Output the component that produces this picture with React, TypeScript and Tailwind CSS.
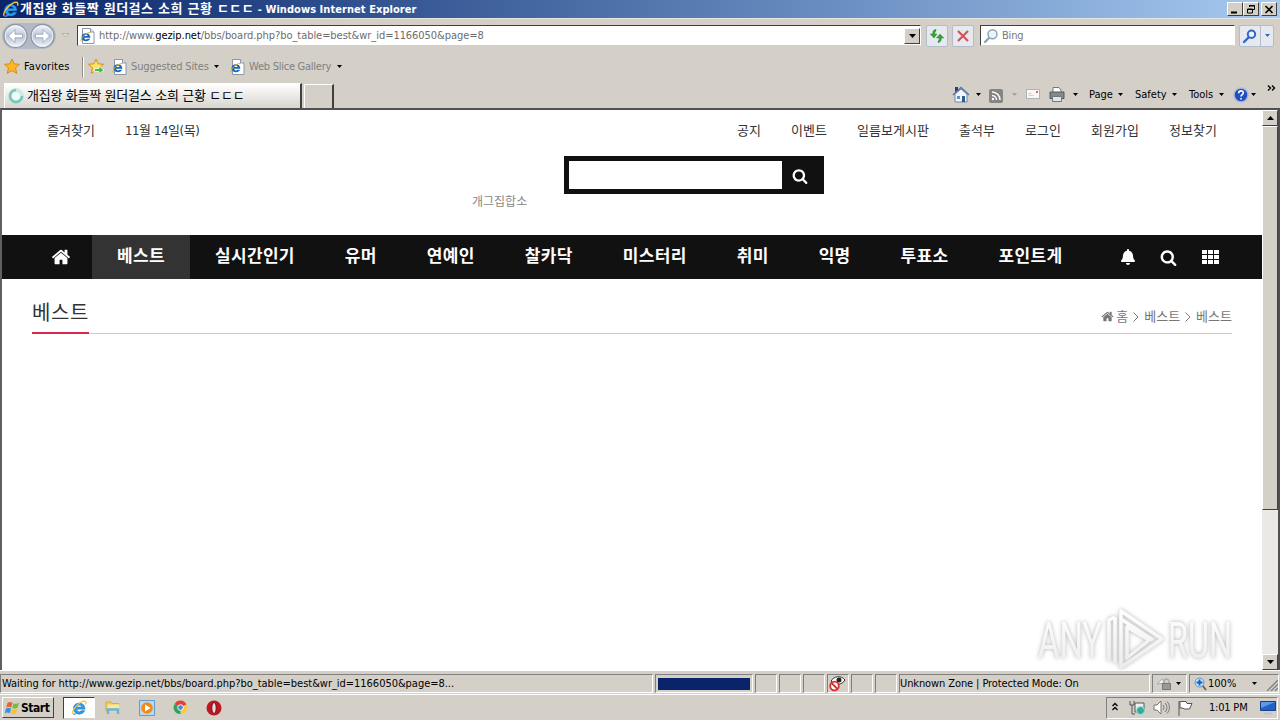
import { ReactNode } from "react";
import { FaBell } from "react-icons/fa";

const topLinks = ["공지", "이벤트", "일름보게시판", "출석부", "로그인", "회원가입", "정보찾기"];

const menu = ["베스트", "실시간인기", "유머", "연예인", "찰카닥", "미스터리", "취미", "익명", "투표소", "포인트게"];

const HomeIcon = ({ size, className = "" }: { size: number; className?: string }) => (
  <svg width={size} height={size} viewBox="0 0 1792 1792" fill="currentColor" className={`shrink-0 ${className}`}>
    <path d="M1472 992v480q0 26-19 45t-45 19h-384v-384h-256v384h-384q-26 0-45-19t-19-45v-480q0-1 .5-3t.5-3l575-474 575 474q1 2 1 6zm223-69l-62 74q-8 9-21 11h-3q-13 0-21-7l-692-577-692 577q-12 8-24 7-13-2-21-11l-62-74q-8-10-7-23.5t11-21.5l719-599q32-26 76-26t76 26l244 204v-195q0-14 9-23t23-9h192q14 0 23 9t9 23v408l219 182q10 8 11 21.5t-7 23.5z" />
  </svg>
);

const SearchIcon = ({ size, className = "" }: { size: number; className?: string }) => (
  <svg width={size} height={size} viewBox="0 0 1792 1792" fill="currentColor" className={`shrink-0 ${className}`}>
    <path d="M1216 832q0-185-131.5-316.5t-316.5-131.5-316.5 131.5-131.5 316.5 131.5 316.5 316.5 131.5 316.5-131.5 131.5-316.5zm512 832q0 52-38 90t-90 38q-54 0-90-38l-343-342q-179 124-399 124-143 0-273.5-55.5t-225-150-150-225-55.5-273.5 55.5-273.5 150-225 225-150 273.5-55.5 273.5 55.5 225 150 150 225 55.5 273.5q0 220-124 399l343 343q37 37 37 90z" />
  </svg>
);

const Caret = ({ className = "" }: { className?: string }) => (
  <svg width="5" height="3" viewBox="0 0 5 3" className={`shrink-0 ${className}`}>
    <path d="M0 0h5L2.5 3z" fill="currentColor" />
  </svg>
);

const IeLogo = ({ size = 16 }: { size?: number }) => (
  <svg width={size} height={size} viewBox="0 0 16 16" className="shrink-0">
    <path d="M14 9.300H5.800c.2 2.800 3.700 3.200 4.700 1.300h3.200C12.200 16 2.400 15.200 2.400 8.400 2.400 1.200 14.600 1.200 14 9.300zM5.900 7h4.800C10.400 4.700 6.200 4.700 5.900 7z" fill="#2f9bea" stroke="#1767b4" strokeWidth=".4" />
    <path d="M2.200 13.800C-.8 11.500 8.500 1 13.600 1.200c1.600.1 1.600 2 .9 3.300" fill="none" stroke="#f5c33a" strokeWidth="1.300" />
    <path d="M2.200 13.800c1 .8 2.600.2 4-.9" fill="none" stroke="#3b9fe8" strokeWidth="1.200" />
  </svg>
);

const IePage = () => (
  <svg width="15" height="16" viewBox="0 0 15 16" className="shrink-0">
    <path d="M2.500.5h8l3.500 3.500v11.500H2.500z" fill="#fff" stroke="#8c96a8" />
    <path d="M10.500.5V4H14" fill="#dfe6ef" stroke="#8c96a8" />
    <path d="M10.300 9.700H4.200c.2 2 2.700 2.200 3.400 1h2.500C9 14.400 1.500 14 1.500 9.200c0-5.200 9-5.200 8.800.5zM4.300 8h3.300C7.400 6.200 4.500 6.200 4.300 8z" fill="#1468bd" />
    <path d="M1 13.500C0 11 6 4 10.500 4.500" fill="none" stroke="#e5ae2c" />
  </svg>
);

const Star = ({ arrow = false }: { arrow?: boolean }) => (
  <svg width="17" height="17" viewBox="0 0 17 17" className="shrink-0">
    <path d="M8 1l2.100 4.800 5.400.5-4 3.600 1.200 5.400L8 12.500l-4.700 2.800 1.200-5.400-4-3.600 5.400-.5z" fill={arrow ? "#ffe25c" : "#fdb829"} stroke="#d58512" strokeWidth=".9" />
    {arrow && <path d="M6.500 10.500h4.500V8l5 4-5 4v-2.500H6.500z" fill="#44c03c" stroke="#fff" strokeWidth=".8" />}
  </svg>
);

const NavCircle = ({ flip = false }: { flip?: boolean }) => (
  <svg width="27" height="26" viewBox="0 0 26 26" className={flip ? "-scale-x-100" : ""}>
    <defs>
      <linearGradient id="orb" x1="0" y1="0" x2="0" y2="1">
        <stop offset="0" stopColor="#f4f7fb" />
        <stop offset=".5" stopColor="#b9c6d8" />
        <stop offset="1" stopColor="#eef5fc" />
      </linearGradient>
    </defs>
    <circle cx="13" cy="13" r="11.500" fill="url(#orb)" stroke="#8d97a6" strokeWidth="1.300" />
    <circle cx="13" cy="13" r="10.300" fill="none" stroke="#fff" strokeOpacity=".7" />
    <path d="M6 13l6.500-6.500v4.700H20v3.600h-7.500v4.700z" fill="#fff" stroke="#8997ab" strokeWidth=".7" />
  </svg>
);

const Lens = ({ color = "#8fa6b4", thick = false }: { color?: string; thick?: boolean }) => (
  <svg width="16" height="16" viewBox="0 0 16 16" className="shrink-0">
    <path d="M2 14L6.500 9.500" stroke={color} strokeWidth="2.400" strokeLinecap="round" />
    <circle cx="9.500" cy="6.300" r={thick ? 3.700 : 4.500} fill="#e9f4fb" stroke={color} strokeWidth={thick ? 2 : 1.500} />
  </svg>
);

const WinButton = ({ children }: { children: ReactNode }) => (
  <div className="w-[16px] h-[14px] bg-[#d4d0c8] border border-t-white border-l-white border-r-[#404040] border-b-[#404040] flex items-center justify-center">
    <svg width="12" height="11" viewBox="0 0 12 11" fill="none" stroke="#000">{children}</svg>
  </div>
);

const ToolButton = ({ children }: { children: ReactNode }) => (
  <div className="w-[22px] h-[22px] border border-[#b3bccb] bg-[#e6e9ef] rounded-[2px] flex items-center justify-center">{children}</div>
);

const ScrollButton = ({ up = false }: { up?: boolean }) => (
  <div className="w-[16px] h-[16px] shrink-0 bg-[#d4d0c8] border border-t-white border-l-white border-r-[#404040] border-b-[#404040] flex items-center justify-center">
    <svg width="7" height="4" viewBox="0 0 7 4" className={up ? "rotate-180" : ""}>
      <path d="M0 0h7L3.500 4z" fill="#000" />
    </svg>
  </div>
);

const Panel = ({ className, children }: { className: string; children?: ReactNode }) => (
  <div className={`h-[19px] shrink-0 border border-t-[#808080] border-l-[#808080] border-r-white border-b-white flex items-center whitespace-nowrap ${className}`}>
    {children}
  </div>
);

function TitleBar() {
  return (
    <div className="h-[18px] shrink-0 flex items-center pl-[2px] pr-[3px] bg-linear-to-r from-[#0a246a] to-[#a6caf0]">
      <IeLogo size={17} />
      <div className="ml-px flex-1 text-white font-bold whitespace-nowrap">
        <span className="text-[13px] tracking-[0.48px]">개집왕 화들짝 원더걸스 소희 근황 ㄷㄷㄷ</span>
        <span className="text-[11px] tracking-[0.06px]"> - Windows Internet Explorer</span>
      </div>
      <WinButton><path d="M2 8.500h6" strokeWidth="2" /></WinButton>
      <WinButton><path d="M4.500 3V1.500h5v4H8M4 2h6M2.500 5v4h5V5zM2 5.500h6" /></WinButton>
      <div className="w-[2px]" />
      <WinButton><path d="M2.500 2l7 7M9.500 2l-7 7" strokeWidth="1.600" /></WinButton>
    </div>
  );
}

function AddressRow() {
  return (
    <div className="h-[34px] shrink-0 flex items-center border-t border-[#e8e6e0] pl-[2px]">
      <div className="flex w-[54px] h-[26px] rounded-full bg-[#b4bac4]">
        <NavCircle />
        <NavCircle flip />
      </div>
      <svg width="9" height="5" viewBox="0 0 9 5" className="ml-[5px]">
        <path d="M1 .5h7L4.500 4z" fill="#e5e2dc" stroke="#aaa69e" strokeWidth=".8" />
      </svg>
      <div className="ml-[7px] w-[844px] h-[21px] bg-white border border-t-[#404040] border-l-[#404040] border-r-white border-b-[#d4d0c8] flex items-center pl-[2px]">
        <IePage />
        <div className="ml-[4px] flex-1 text-[#6d6d6d] tracking-[-0.05px] whitespace-nowrap pt-px">
          http://www.<span className="text-black">gezip.net</span>/bbs/board.php?bo_table=best&amp;wr_id=1166050&amp;page=8
        </div>
        <ScrollButton />
      </div>
      <div className="ml-[5px] flex gap-[4px]">
        <ToolButton>
          <svg width="16" height="16" viewBox="0 0 16 16" fill="#35a336" stroke="#217725" strokeWidth=".4">
            <path d="M7 1.500C4 1.500 3.700 4 3.700 6H1.200L5 10l3-4H5.700C5.700 4.500 6 3.500 7 3zM9 14.500c3 0 3.300-2.500 3.300-4.500h2.500L11 6l-3.500 4h2.800c0 1.500-.3 2.500-1.300 3z" />
          </svg>
        </ToolButton>
        <ToolButton>
          <svg width="14" height="14" viewBox="0 0 14 14" stroke="#d6525a" strokeWidth="2.200">
            <path d="M2 2l10 10M12 2L2 12" />
          </svg>
        </ToolButton>
      </div>
      <div className="ml-[6px] w-[255px] h-[21px] bg-white border border-t-[#404040] border-l-[#404040] border-r-white border-b-[#d4d0c8] flex items-center pl-[2px] gap-[3px] text-[#777]">
        <Lens />
        <span className="pt-px tracking-[-0.2px]">Bing</span>
      </div>
      <div className="ml-[4px] w-[35px] h-[22px] border border-[#b3bccb] bg-[#e6e9ef] rounded-[2px] flex items-center">
        <div className="w-[21px] h-full border-r border-[#b3bccb] flex items-center justify-center"><Lens color="#2c68c8" thick /></div>
        <Caret className="ml-[4px] text-[#2c68c8]" />
      </div>
    </div>
  );
}

function FavoritesRow() {
  return (
    <div className="h-[29px] shrink-0 flex items-center pl-[4px] whitespace-nowrap">
      <Star />
      <span className="ml-[3px] w-[58px] tracking-[0.1px]">Favorites</span>
      <div className="w-[2px] h-[20px] border-l border-l-[#8f8c86] bg-white" />
      <div className="w-[4px]" />
      <Star arrow />
      <div className="w-[7px]" />
      <IePage />
      <span className="ml-[4px] w-[83px] text-[#808080] tracking-[-0.15px] pt-px">Suggested Sites</span>
      <Caret />
      <div className="w-[11px]" />
      <IePage />
      <span className="ml-[4px] w-[88px] text-[#808080] tracking-[-0.25px] pt-px">Web Slice Gallery</span>
      <Caret />
    </div>
  );
}

function TabRow() {
  return (
    <div className="h-[27px] shrink-0 flex items-end pl-[4px] whitespace-nowrap">
      <div className="w-[298px] h-[25px] border-t border-l border-white border-r-2 border-r-[#404040] bg-linear-to-b from-white to-[#d8d5ce] flex items-center pl-[3px]">
        <svg width="16" height="16" viewBox="0 0 16 16">
          <circle cx="8" cy="8" r="6" fill="#eefaf8" stroke="#7cc9bd" strokeWidth="3" />
          <path d="M8 2a6 6 0 0 1 6 6" fill="none" stroke="#cdeee8" strokeWidth="3" />
        </svg>
        <span className="ml-[3px] text-[13px] tracking-[-0.2px]">개집왕 화들짝 원더걸스 소희 근황 ㄷㄷㄷ</span>
      </div>
      <div className="ml-[2px] w-[30px] h-[24px] border-t border-l border-white border-r-2 border-r-[#404040]" />
      <div className="ml-auto h-[27px] flex items-center">
        <svg width="18" height="17" viewBox="0 0 18 17">
          <path d="M3 8v8h12V8L9 3z" fill="#f3f5f8" stroke="#7387a5" />
          <path d="M1 9l8-7.500L17 9" fill="none" stroke="#5977a8" strokeWidth="1.600" />
          <path d="M3 1h3v3L3 6z" fill="#263f88" />
          <path d="M5 10h3v3H5z" fill="#4b98cc" />
          <path d="M10 10h3v6h-3z" fill="#2b5c92" />
        </svg>
        <Caret className="ml-[6px]" />
        <svg width="14" height="14" viewBox="0 0 14 14" className="ml-[8px] mt-[2px]">
          <rect width="14" height="14" rx="2" fill="#858585" />
          <path d="M3 6.500A4.500 4.500 0 0 1 7.500 11M3 3a8 8 0 0 1 8 8" fill="none" stroke="#fff" strokeWidth="1.500" />
          <circle cx="4" cy="10" r="1.200" fill="#fff" />
        </svg>
        <Caret className="ml-[9px] text-[#a5a29b]" />
        <svg width="15" height="11" viewBox="0 0 15 11" className="ml-[9px]">
          <rect x=".5" y=".5" width="13" height="9" fill="#f8f8f8" stroke="#b1b1b1" />
          <path d="M2.500 6.500h5M2.500 4.500h3" stroke="#ccc" />
          <path d="M10 2h2v2h-2z" fill="#d6685f" />
        </svg>
        <svg width="16" height="15" viewBox="0 0 16 15" className="ml-[8px]">
          <path d="M4 5V.5h6L12 3v2" fill="#fff" stroke="#777" />
          <path d="M1 5h14v6.500H1z" fill="#85898e" stroke="#54585d" />
          <path d="M3.500 9.500h9v5h-9z" fill="#dce9f5" stroke="#777" />
        </svg>
        <Caret className="ml-[8px]" />
        <span className="ml-[11px] w-[29px]">Page</span>
        <Caret />
        <span className="ml-[12px] w-[37px]">Safety</span>
        <Caret />
        <span className="ml-[12px] w-[30px]">Tools</span>
        <Caret />
        <svg width="16" height="16" viewBox="0 0 16 16" className="ml-[9px]">
          <circle cx="8" cy="8" r="7" fill="#244ec0" stroke="#a9b9df" strokeWidth="1.500" />
          <path d="M5.700 6.200c0-3.200 4.800-3 4.600-.2C10.200 7.600 8 7.600 8 9.500M8 11v1.600" fill="none" stroke="#fff" strokeWidth="1.600" />
        </svg>
        <Caret className="ml-[2px]" />
        <svg width="9" height="6" viewBox="0 0 9 6" className="ml-[11px] mr-[4px] mb-[13px]" fill="none" stroke="#000" strokeWidth="1.400">
          <path d="M1 .5L3.500 3 1 5.500M5 .5L7.500 3 5 5.500" />
        </svg>
      </div>
    </div>
  );
}

function Watermark() {
  return (
    <svg width="206" height="68" viewBox="0 0 206 68" className="absolute right-[26px] bottom-[-4px] drop-shadow-[0_0_2px_rgba(0,0,0,0.3)]">
      <defs>
        <linearGradient id="fade" x1="0" y1="0" x2="0" y2="1">
          <stop offset="0" stopColor="#fff" />
          <stop offset="1" stopColor="#ececec" />
        </linearGradient>
      </defs>
      <g fill="url(#fade)" fontFamily="Roboto, sans-serif" fontSize="50">
        <text x="8" y="52" textLength="64" lengthAdjust="spacingAndGlyphs">ANY</text>
        <text x="138" y="52" textLength="64" lengthAdjust="spacingAndGlyphs">RUN</text>
      </g>
      <path d="M79 55V14l6-3M85 57V11M91 5l41 28-41 28zM91 13l32 21M97 52V21l22 13z" fill="none" stroke="url(#fade)" strokeWidth="3.500" strokeLinejoin="round" />
    </svg>
  );
}

function Page() {
  return (
    <div className="flex-1 relative bg-white flex flex-col overflow-hidden">
      <div className="h-[125px] shrink-0 flex flex-col">
        <div className="h-[42px] px-[45px] flex items-center justify-between text-[13px] tracking-[0.04px] text-[#333]">
          <div className="flex gap-[30px]">
            <span>즐겨찾기</span>
            <span className="tracking-[-0.4px]">11월 14일(목)</span>
          </div>
          <div className="flex gap-[30px]">
            {topLinks.map((link) => <span key={link}>{link}</span>)}
          </div>
        </div>
        <div className="flex pl-[470px] pt-[4px]">
          <span className="w-[92px] pt-[37px] text-[12px] leading-[18px] text-[#888]">개그집합소</span>
          <div className="w-[260px] h-[38px] bg-[#111] p-[5px] flex">
            <div className="w-[213px] bg-white" />
            <div className="flex-1 flex items-center justify-center text-white">
              <SearchIcon size={16} className="mt-px mr-px" />
            </div>
          </div>
        </div>
      </div>
      <div className="h-[44px] shrink-0 bg-[#111] text-white flex items-center">
        <div className="w-[90px] pl-[49px]"><HomeIcon size={20} /></div>
        {menu.map((item, i) => (
          <div key={item} className={`h-full px-[25px] flex items-center text-[17px] leading-none tracking-[0.34px] font-bold whitespace-nowrap pb-px ${i === 0 ? "bg-[#333]" : ""}`}>
            {item}
          </div>
        ))}
        <div className="ml-auto mr-[43px] flex items-center">
          <FaBell size={16} />
          <SearchIcon size={17} className="ml-[24px] mt-px" />
          <svg width="17" height="14" viewBox="0 0 17 14" fill="currentColor" className="ml-[25px]">
            <path d="M0 0h5v4H0zM6 0h5v4H6zM12 0h5v4h-5zM0 5h5v4H0zM6 5h5v4H6zM12 5h5v4h-5zM0 10h5v4H0zM6 10h5v4H6zM12 10h5v4h-5z" />
          </svg>
        </div>
      </div>
      <div className="mx-[30px] h-[55px] border-b border-[#ccc] flex justify-between">
        <div className="h-[55px] w-[57px] border-b-2 border-[#d9284c] pt-[20px] text-[20px] leading-[28px] tracking-[0.6px] text-[#333] whitespace-nowrap">베스트</div>
        <div className="pt-[29px] leading-[18px] text-[13px] text-[#777] flex items-start whitespace-nowrap">
          <HomeIcon size={13} className="mt-[2px] mr-[2px]" />
          <span>홈</span>
          <svg width="6" height="10" viewBox="0 0 6 10" className="mt-[4px] mx-[5px]" fill="none" stroke="#777"><path d="M.5.5L5 5 .5 9.500" /></svg>
          <span>베스트</span>
          <svg width="6" height="10" viewBox="0 0 6 10" className="mt-[4px] mx-[5px]" fill="none" stroke="#777"><path d="M.5.5L5 5 .5 9.500" /></svg>
          <span>베스트</span>
        </div>
      </div>
      <Watermark />
    </div>
  );
}

function ScrollBar() {
  return (
    <div className="w-[16px] shrink-0 flex flex-col bg-[#ebe9e5]">
      <ScrollButton up />
      <div className="h-[384px] bg-[#d4d0c8] border border-t-white border-l-white border-r-[#404040] border-b-[#404040]" />
      <div className="flex-1" />
      <ScrollButton />
    </div>
  );
}

function StatusBar() {
  return (
    <div className="h-[24px] shrink-0 flex items-center gap-[2px] border-t border-white pt-[2px]">
      <Panel className="w-[653px] pl-[1px] tracking-[-0.03px]">Waiting for http://www.gezip.net/bbs/board.php?bo_table=best&amp;wr_id=1166050&amp;page=8...</Panel>
      <Panel className="w-[98px] pl-[2px]"><div className="w-[92px] h-[12px] bg-[#0a246a]" /></Panel>
      <Panel className="w-[22px]" />
      <Panel className="w-[22px]" />
      <Panel className="w-[22px]" />
      <Panel className="w-[22px]">
        <svg width="19" height="17" viewBox="0 0 19 17" className="shrink-0">
          <path d="M3 6c3-5 10-6 14-1-3 5-10 6-14 1z" fill="#fff" stroke="#333" />
          <circle cx="11" cy="5" r="2.500" fill="#222" />
          <circle cx="6.500" cy="11" r="4.300" fill="#fff" stroke="#d23131" strokeWidth="1.800" />
          <path d="M3.500 8l6 6" stroke="#d23131" strokeWidth="1.800" />
        </svg>
      </Panel>
      <Panel className="w-[22px]" />
      <Panel className="w-[22px]" />
      <Panel className="w-[251px] tracking-[-0.1px]">Unknown Zone | Protected Mode: On</Panel>
      <Panel className="w-[35px] pl-[3px]">
        <svg width="16" height="15" viewBox="0 0 16 15">
          <path d="M1 8l5-5 3 4z" fill="#eee" stroke="#aaa" />
          <path d="M8 8V5.500a2.500 2.500 0 0 1 5 0V8" fill="none" stroke="#aaa" strokeWidth="1.500" />
          <path d="M6.500 7.500h8v6h-8z" fill="#999" stroke="#777" />
        </svg>
        <Caret className="ml-[4px]" />
      </Panel>
      <Panel className="w-[90px] pl-[4px]">
        <svg width="13" height="14" viewBox="0 0 13 14">
          <path d="M8 8l4 5" stroke="#79643e" strokeWidth="2" />
          <circle cx="5.500" cy="5.500" r="4.500" fill="#cfe4fb" stroke="#5d91d2" />
          <path d="M5.500 2.500v6M2.500 5.500h6" stroke="#145fc0" strokeWidth="2" />
        </svg>
        <span className="ml-px w-[44px]">100%</span>
        <Caret />
        <svg width="11" height="11" viewBox="0 0 11 11" className="ml-auto mt-[4px]" stroke="#808080" strokeWidth="1.300">
          <path d="M0 11L11 0M4 11l7-7M8 11l3-3" />
        </svg>
      </Panel>
    </div>
  );
}

function TaskBar() {
  return (
    <div className="h-[26px] shrink-0 border-t border-white flex items-center pl-[2px] pr-[2px]">
      <div className="w-[52px] h-[21px] border border-t-white border-l-white border-r-[#404040] border-b-[#404040] flex items-center pl-[1px] font-bold text-[12px] tracking-[-0.45px]">
        <svg width="17" height="16" viewBox="0 0 16 16" className="shrink-0">
          <path d="M3 3c2-1.500 3-1.200 5-.2L6.800 7.500C5 6.500 3.500 6.500 1.700 7.500z" fill="#e9632b" />
          <path d="M9 3.200c2 1 3.500.8 5.500-.4l-1.300 4.700c-2 1.200-3.500 1.200-5.400.4z" fill="#7bb93c" />
          <path d="M1.500 8.500c2-1.200 3.400-1 5.100 0l-1.300 4.700C3.500 12.200 2 12.300.3 13.200z" fill="#3f8ed8" />
          <path d="M7.600 9c2 .9 3.500.8 5.400-.3l-1.300 4.600c-2 1.100-3.500 1.100-5.400.3z" fill="#f4c52b" />
        </svg>
        Start
      </div>
      <div className="ml-[9px] w-[32px] h-[22px] bg-white border border-t-[#404040] border-l-[#404040] border-r-white border-b-[#d4d0c8] flex items-center justify-center">
        <IeLogo />
      </div>
      <svg width="16" height="16" viewBox="0 0 16 16" className="ml-[10px]">
        <path d="M1 2h5l1 1.500h7V11H1z" fill="#edca62" stroke="#d6ad45" />
        <path d="M2.500 4.500h12v7h-12z" fill="#fae99b" />
        <path d="M3 14V9.500h10V14" fill="none" stroke="#65b3de" strokeWidth="2.400" />
      </svg>
      <svg width="16" height="16" viewBox="0 0 16 16" className="ml-[18px]">
        <path d="M.5.5h15v15H.5z" fill="#b9d9f3" stroke="#5e9cd1" />
        <circle cx="8" cy="8" r="5.800" fill="#f08a19" />
        <path d="M6 4.500L11.500 8 6 11.500z" fill="#fff" />
      </svg>
      <svg width="15" height="15" viewBox="0 0 16 16" className="ml-[18px]">
        <path d="M8 8L1.700 4.300A7 7 0 0 1 14.300 4.800z" fill="#dc4437" />
        <path d="M8 8l6.300-3.200A7 7 0 0 1 8 15z" fill="#fbcb3d" />
        <path d="M8 8v7A7 7 0 0 1 1.700 4.300z" fill="#2fa456" />
        <circle cx="8" cy="8" r="3" fill="#4684e6" stroke="#fff" />
      </svg>
      <svg width="16" height="16" viewBox="0 0 16 16" className="ml-[18px]">
        <circle cx="8" cy="8" r="7.500" fill="#bd1722" />
        <ellipse cx="8" cy="8" rx="2.200" ry="5.500" fill="#e4e0da" stroke="#7d0d12" />
      </svg>
      <Panel className="ml-auto w-[172px] h-[22px]">
        <svg width="6" height="9" viewBox="0 0 6 9" className="ml-[5px] mb-[2px]" fill="none" stroke="#000" strokeWidth="1.300">
          <path d="M.5 4L3 1.500 5.500 4M.5 8L3 5.500 5.500 8" />
        </svg>
        <svg width="17" height="16" viewBox="0 0 17 16" className="ml-[11px]">
          <path d="M1 1v4h4V1M3 5v9h3" fill="none" stroke="#555" />
          <path d="M6 3h9v9H6z" fill="#e9f1f2" stroke="#555" />
          <circle cx="11.500" cy="10.500" r="4" fill="#3aa898" stroke="#aee0d7" />
        </svg>
        <svg width="17" height="15" viewBox="0 0 17 15" className="ml-[7px]" fill="#fff" stroke="#777">
          <path d="M1 5h3l4-4v13l-4-4H1z" />
          <path d="M10 5c1.300 1.500 1.300 3.500 0 5M12 3c2.600 2.600 2.600 6.400 0 9M14 1.500c3.200 3.500 3.200 8.500 0 12" fill="none" />
        </svg>
        <svg width="16" height="16" viewBox="0 0 16 16" className="ml-[7px]" fill="#fff" stroke="#555">
          <path d="M2 1v15" />
          <path d="M3 1.500h6l1 2h5L12.500 9H7l-1-1H3z" />
        </svg>
        <span className="ml-[16px] w-[51px] tracking-[-0.2px]">1:01 PM</span>
        <svg width="16" height="15" viewBox="0 0 16 15">
          <path d="M.5 1.500h15v9H.5z" fill="#2161c8" stroke="#183f83" />
          <path d="M1 2h14L1 8z" fill="#5e99e8" />
          <path d="M4 13.500h8" stroke="#b8c5d8" strokeWidth="2" />
        </svg>
      </Panel>
    </div>
  );
}

export default function App() {
  return (
    <div className="w-[1280px] h-[720px] overflow-hidden flex flex-col bg-[#d4d0c8] text-black text-[11px] leading-[14px] font-['DejaVu_Sans_Condensed','Noto_Sans_CJK_KR',sans-serif]">
      <TitleBar />
      <AddressRow />
      <FavoritesRow />
      <TabRow />
      <div className="h-[562px] shrink-0 flex border-2 border-b-0 border-t-[#505050] border-l-[#606060] border-r-[#505050]">
        <Page />
        <ScrollBar />
      </div>
      <StatusBar />
      <TaskBar />
    </div>
  );
}
